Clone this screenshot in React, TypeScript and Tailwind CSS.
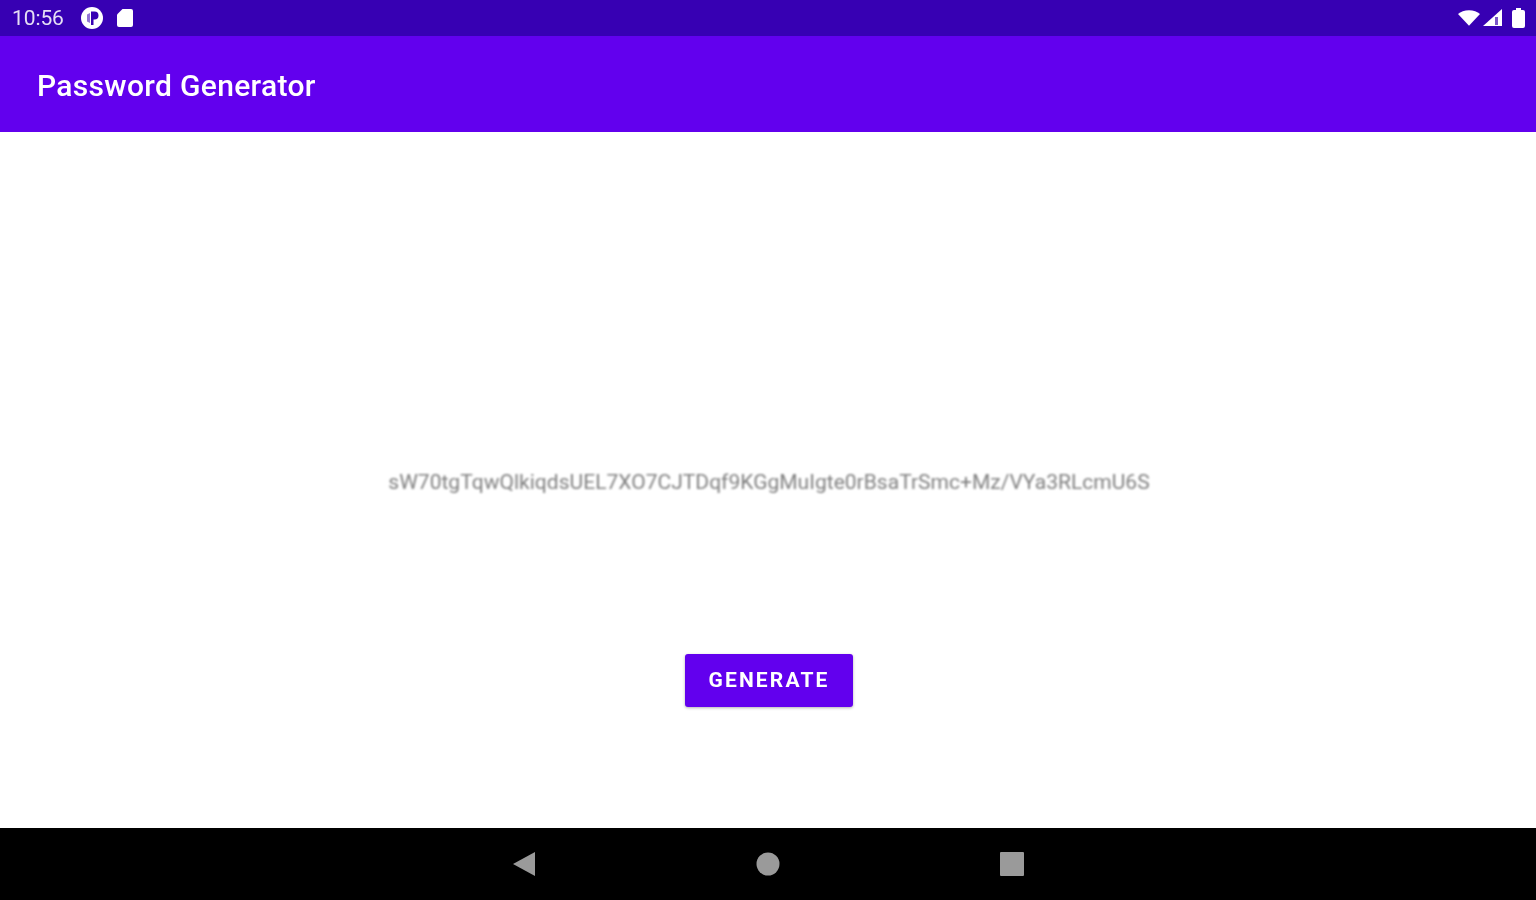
export default function App() {
  return (
    <div className="w-[1536px] h-[900px] flex flex-col bg-white overflow-hidden font-['Roboto',sans-serif]">
      <div className="h-9 bg-[#3700B3] flex items-center justify-between pl-3 pr-[11px] text-white">
        <div className="flex items-center">
          <span className="inline-block text-[21px] leading-none tracking-[-0.1px] text-[#e6dff5] blur-[0.7px]">10:56</span>
          <svg width="24" height="24" viewBox="0 0 24 24" className="ml-[16px] blur-[0.7px]">
            <circle cx="12" cy="12" r="11" fill="#fff" />
            <path d="M11 5.5h3.5a4 4 0 0 1 0 8H13.5V19H11Z" fill="#3700B3" />
            <path d="M7 8.5l3-1.5v10l-3-1.5Z" fill="#3700B3" opacity="0.55" />
          </svg>
          <svg width="18" height="20" viewBox="0 0 18 20" className="ml-[12px] blur-[0.7px]">
            <path d="M6.5 1H15a2 2 0 0 1 2 2v14a2 2 0 0 1-2 2H3a2 2 0 0 1-2-2V6.5Z" fill="#fff" />
          </svg>
        </div>
        <div className="flex items-center">
          <svg width="22" height="18" viewBox="0 0 24 18" className="blur-[0.7px]">
            <path d="M0 4.5C3 2 7 0.5 12 0.5s9 1.5 12 4L12 17.5Z" fill="#fff" />
          </svg>
          <svg width="20" height="18" viewBox="0 0 20 18" className="ml-[3px] blur-[0.7px]">
            <path d="M0 17 19 0v17Z" fill="#fff" />
            <path d="M12 8h3v8h-3Z" fill="#7a55c8" />
          </svg>
          <svg width="13" height="20" viewBox="0 0 13 20" className="ml-[9px] blur-[0.7px]">
            <path d="M4 0h5v2h2a2 2 0 0 1 2 2v14a2 2 0 0 1-2 2H2a2 2 0 0 1-2-2V4a2 2 0 0 1 2-2h2Z" fill="#fff" />
          </svg>
        </div>
      </div>
      <div className="h-24 bg-[#6200EE] flex items-center pl-[37px] pt-[3px]">
        <span className="inline-block text-[30px] leading-none font-medium tracking-[0.33px] text-white blur-[0.7px]">Password Generator</span>
      </div>
      <main className="flex-1 flex flex-col items-center pl-[2px]">
        <p className="mt-[337px] h-[26px] text-[21px] leading-[26px] tracking-[0.02px] text-[#808080] whitespace-nowrap blur-[0.8px]">
          sW70tgTqwQlkiqdsUEL7XO7CJTDqf9KGgMuIgte0rBsaTrSmc+Mz/VYa3RLcmU6S
        </p>
        <button className="mt-[159px] w-[168px] h-[53px] rounded-[3px] bg-[#6200EE] shadow-[0_1px_3px_rgba(0,0,0,0.3)] text-white text-[21px] font-bold tracking-[2.15px] leading-none">
          <span className="blur-[0.7px] inline-block">GENERATE</span>
        </button>
      </main>
      <div className="h-[72px] bg-black flex items-center justify-center gap-[220px] pb-[1px] pr-[1px]">
        <svg width="24" height="26" viewBox="0 0 24 26" className="blur-[0.7px]">
          <path d="M1 13 23 1v24Z" fill="#9a9a9a" />
        </svg>
        <svg width="24" height="24" viewBox="0 0 24 24" className="blur-[0.7px]">
          <circle cx="12" cy="12" r="11.5" fill="#9a9a9a" />
        </svg>
        <svg width="24" height="24" viewBox="0 0 24 24" className="blur-[0.7px]">
          <rect width="24" height="24" rx="1" fill="#9a9a9a" />
        </svg>
      </div>
    </div>
  );
}
